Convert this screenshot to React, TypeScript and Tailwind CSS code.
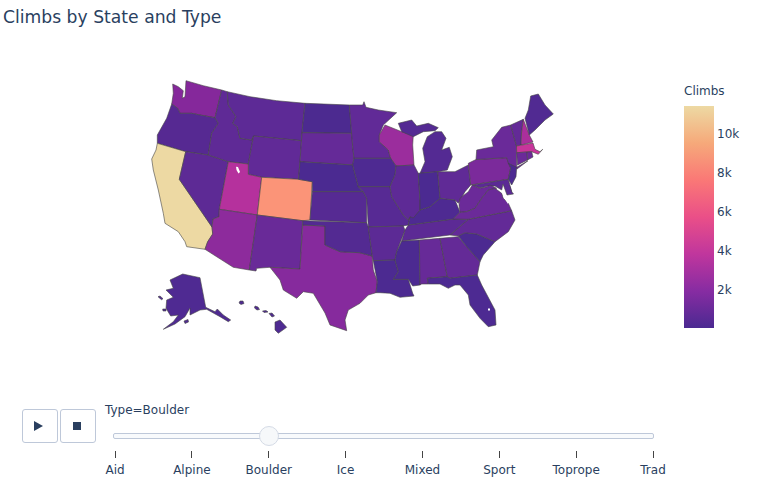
import React from 'react'

const states: { id: string; fill: string; pts: string }[] = [
    { id: 'WA', fill: '#85289b', pts: '172.7,84 178.3,86.7 183.3,90.7 182.3,98.3 185,96.7 186,80.7 203.3,85.7 221.7,90 215,117.7 200,115 191.7,113.3 180,113.3 177.7,108.3 171.7,104 173.3,93.3' },
    { id: 'OR', fill: '#562992', pts: '171.7,104 177.7,108.3 180,113.3 191.7,113.3 200,115 215,117.7 218.3,123.3 211.7,133.3 208.3,155 185.7,151.7 157.3,143.3 157.3,135 166.7,118.3' },
    { id: 'CA', fill: '#edd9a3', pts: '157.3,143.3 185.7,151.7 179.3,179.3 212,227 212.7,234 207.7,241.7 205,249.3 186.7,246.7 185,241.7 178.3,231.7 165,223.3 163.3,213.3 158.3,190 153.3,170 151.7,159 156,150' },
    { id: 'NV', fill: '#5d2a95', pts: '185.7,151.7 208.3,155 228.3,161.7 219.3,209.3 219,216.7 213,219 212,227 179.3,179.3' },
    { id: 'ID', fill: '#5f2a96', pts: '221.7,90 227.3,91.7 228.3,105 236,116.7 232.7,123.3 237.3,126.7 240,138.3 251.7,140 253.5,136 248.3,164 228.3,161.7 208.3,155 211.7,133.3 218.3,123.3 215,117.7' },
    { id: 'MT', fill: '#5d2a96', pts: '227.3,91.7 250,96.7 276.7,100.7 305,103.3 302,132.7 301.5,140.7 253.5,136 251.7,140 240,138.3 237.3,126.7 232.7,123.3 236,116.7 228.3,105' },
    { id: 'WY', fill: '#612a97', pts: '253.5,136 301.5,140.7 300,161.7 298.5,179.3 261.7,177.3 248.3,174.3 248.3,164' },
    { id: 'UT', fill: '#b5319d', pts: '228.3,161.7 248.3,164 248.3,174.3 261.7,177.3 257.3,215 219.3,209.3' },
    { id: 'CO', fill: '#fb9478', pts: '261.7,177.3 298.5,179.3 312.3,181.7 310,220 302.7,220.7 257.3,215' },
    { id: 'AZ', fill: '#8d2b9c', pts: '219.3,209.3 257.3,215 249.3,270 233.3,267.3 205,249.3 207.7,241.7 212.7,234 212,227 213,219 219,216.7' },
    { id: 'NM', fill: '#692a98', pts: '257.3,215 302.7,220.7 300,269 270,267.3 256.7,268.3 256,271 249.3,270' },
    { id: 'TX', fill: '#862a9d', pts: '302.7,225 325,226 325,245 340,251.7 360,252.7 372.3,256 373.3,270 377.3,281.7 376,292.7 368.3,295 360,303.3 348.3,310 345,320 346.7,330.7 330,325 325,313 313.3,293.3 303.3,291.7 296.7,298.3 283.3,290 280,280 270,267.3 300,269' },
    { id: 'ND', fill: '#4c2a90', pts: '305,103.3 349.3,105 351.7,133.3 302,132.7' },
    { id: 'SD', fill: '#652a98', pts: '302,132.7 351.7,133.3 352.7,146.7 354,158.3 352.7,165 300,161.7' },
    { id: 'NE', fill: '#4b2a91', pts: '300,161.7 352.7,165 358.3,186.7 363.3,191.7 312.3,191.7 312.3,181.7 298.5,179.3' },
    { id: 'KS', fill: '#562a93', pts: '312.3,191.7 363.3,191.7 366.7,198.3 366.7,222.7 310,220' },
    { id: 'OK', fill: '#532a92', pts: '302.7,220.7 366.7,222.7 368.3,227 372.3,256 360,252.7 340,251.7 325,245 325,226 302.7,225' },
    { id: 'MN', fill: '#612a97', pts: '349.3,105 362.7,105 364,101.7 366,107.3 378.3,110 396.7,112.7 383.3,125 379.3,135 379.3,141.7 388.3,150 390.7,158.3 354,158.3 352.7,146.7' },
    { id: 'WI', fill: '#9b2d9d', pts: '385,125 401.7,131.7 413.3,135 412.7,145 414,165 396,166 390.7,158.3 388.3,150 379.3,141.7 379.3,135' },
    { id: 'MIU', fill: '#542a93', pts: '398.3,123.3 411.7,120 416.7,126 428.3,123.3 438.3,127.7 435,130.7 423.3,131.7 413.3,136.7 401.7,131.7' },
    { id: 'MIL', fill: '#542a93', pts: '427.3,136.7 435,131.7 441.7,131.7 446,138.3 441.7,150 449.3,147.3 452.3,156.7 447.3,170 437.7,171.7 420,173.3 425,161.7 422.7,148.3' },
    { id: 'IA', fill: '#4e2a92', pts: '354,158.3 390.7,158.3 396,166 395,175 390,186.7 358.3,186.7 352.7,165' },
    { id: 'MO', fill: '#572a94', pts: '358.3,186.7 390,186.7 391.7,196.7 403.3,215 408.3,220 410,216.7 408.3,225 403.3,226 368.3,227 366.7,198.3 363.3,191.7' },
    { id: 'AR', fill: '#5c2a95', pts: '368.3,227 403.3,226 405,230 396.7,251.7 395,260 373.3,260.7 372.3,256' },
    { id: 'LA', fill: '#4c2a91', pts: '373.3,260.7 395,260 398.3,271.7 393.3,279.3 408.3,279.3 412.7,293.3 414,296 400,297.3 390,293.3 380,292.7 376,292.7 377.3,281.7' },
    { id: 'MS', fill: '#4c2a91', pts: '401.7,241 419.3,240 420,285 412.7,286 408.3,279.3 393.3,279.3 398.3,271.7 395,260 396.7,251.7' },
    { id: 'AL', fill: '#672a98', pts: '419.3,240 440,238.3 447.3,276.7 427.3,278.3 428.3,284 421.7,284 420,285' },
    { id: 'GA', fill: '#642a97', pts: '440,238.3 458.3,236.7 466.7,246.7 480,261.7 477.3,275 450,278.3 447.3,276.7' },
    { id: 'FL', fill: '#4d2a92', pts: '427.3,278.3 447.3,276.7 450,278.3 477.3,275 481.7,285 495,310 496,325 488.3,326.7 480,318.3 470,305 468.3,295 460,285 455,285 448.3,288.3 440,284 428.3,284' },
    { id: 'SC', fill: '#4c2a91', pts: '458.3,236 465,232.7 476.7,234 495,241.7 483.3,255 480,261.7 466.7,246.7' },
    { id: 'NC', fill: '#632a97', pts: '450,235 458.3,236 465,232.7 476.7,234 495,241.7 508.3,231.7 515,220 511.7,210.7 468.3,219.3' },
    { id: 'TN', fill: '#5c2a95', pts: '408.3,225 453.3,219 468.3,219.3 450,235 401.7,241 405,230' },
    { id: 'KY', fill: '#4e2a92', pts: '408.3,225 410,216.7 420,210 430,206.7 440,198.3 455,200 460,212.3 453.3,219' },
    { id: 'IL', fill: '#5e2a96', pts: '396,166 414,165 418.3,173.3 420,200 420,210 413.3,218 410,216.7 408.3,220 403.3,215 391.7,196.7 390,186.7 395,175' },
    { id: 'IN', fill: '#4b2a91', pts: '418.3,173.3 437.7,171.7 440,198.3 430,206.7 420,210 420,200' },
    { id: 'OH', fill: '#602a96', pts: '437.7,171.7 455,171.7 468.3,165 470.7,185 465,191.7 458.3,203.3 455,200 440,198.3' },
    { id: 'PA', fill: '#7b2a9b', pts: '468.3,163.3 476,159.5 506.7,157.7 510.7,168 508.3,179.3 470.7,185' },
    { id: 'NY', fill: '#6a2a99', pts: '476,159.5 476.7,150 493.3,146.7 491.7,140 501.7,127.3 510.7,125 516.5,146 516.7,163.3 516.7,167.3 528,160.7 517,169 508.3,163.3 506.7,157.7' },
    { id: 'VT', fill: '#632a97', pts: '510.7,125 523.3,119.3 521.5,133 521,145 516.5,146' },
    { id: 'NH', fill: '#ab2f9c', pts: '523.3,119.3 529.3,135 533,142 521,145 521.5,133' },
    { id: 'ME', fill: '#512a92', pts: '525,118.3 528.3,110 530.7,96 538.3,94 545,105 553.3,114 545,120 535,130 529.3,135' },
    { id: 'MA', fill: '#c8359b', pts: '516.5,146 533,143 535,149.3 540,151.7 542.7,149.3 538.3,154.3 531.7,151.7 516.7,152.7' },
    { id: 'CT', fill: '#6b2a99', pts: '516.7,152.7 527,152 527.5,160 517.5,165' },
    { id: 'RI', fill: '#6a2a98', pts: '527,152 531.7,151.7 533,157 527.5,160' },
    { id: 'NJ', fill: '#4c2a91', pts: '508.3,163.3 516.7,167.3 516,176.7 511.7,185 508.3,179.3 510.7,168' },
    { id: 'DE', fill: '#532a92', pts: '506.7,181.7 510,186.7 511.7,191.7 507.7,191.7' },
    { id: 'MD', fill: '#5b2a95', pts: '472.3,185 508.3,179.3 511.7,191.7 513.5,194 507,195 503,184 501.7,190 495,186 488,186 480,188' },
    { id: 'WV', fill: '#6b2a99', pts: '459,205 460,198.3 468.3,191.7 472.3,185 480,188.3 486.7,186.7 490,185 496.7,188.3 488.3,190 481.7,198.3 475,208.3 466.7,211.7 460,212.3' },
    { id: 'VA', fill: '#6b2a99', pts: '453.3,219 460,212.3 466.7,211.7 475,208.3 481.7,198.3 488.3,190 495,188.3 501.7,193.3 503.3,198.3 508.3,203.3 511.7,210.7 468.3,219.3' },
    { id: 'AK', fill: '#4f2a92', pts: '182.7,274 200,277.7 205.7,307.3 215,311.7 217.3,309 223.3,315 230.7,320 228.3,321.7 220,316.7 206.7,309.3 200,310 190,315 190,308 185,316.7 175,324 163.3,329.3 173.3,321.7 178.3,315 170.7,316 166,308.3 166.7,300 173.3,297.3 166,290 173.3,288.3 170,280' },
    { id: 'AK2', fill: '#4f2a92', pts: '158,296.7 160,296 163,298.7 161.5,299.7' },
    { id: 'AK3', fill: '#4f2a92', pts: '162.7,309 166,309 166,311 163,311' },
    { id: 'AK4', fill: '#4f2a92', pts: '184,321 188,319.5 188.5,322 185,323.5' },
    { id: 'HI1', fill: '#4f2a92', pts: '240,301 243,301 244,303.5 241,304.5 239,303' },
    { id: 'HI2', fill: '#4f2a92', pts: '255,306 258,307 259.5,309.5 257,310 254.5,308' },
    { id: 'HI3', fill: '#4f2a92', pts: '262.5,311 266,310.5 268,312 264,312.5' },
    { id: 'HI4', fill: '#4f2a92', pts: '269,313.5 272,313 274.5,316 272,317' },
    { id: 'HI5', fill: '#4f2a92', pts: '275,322 280,320 286.7,327.3 278.3,333.3 275,330' },
]

const ticks = ['Aid', 'Alpine', 'Boulder', 'Ice', 'Mixed', 'Sport', 'Toprope', 'Trad']
const barTicks = ['10k', '8k', '6k', '4k', '2k']

const App = () => {
    return (
        <div className="flex h-[483px] w-[762px] flex-col overflow-hidden bg-white font-['DejaVu_Sans',sans-serif] text-xs text-[#2a3f5f]">
            <div className="h-[75px] pl-[3px] pt-[5px] text-[17.2px] leading-[24px]">Climbs by State and Type</div>
            <div className="flex h-[265px]">
                <svg className="ml-[140px] h-[265px] w-[420px] shrink-0" viewBox="140 75 420 265">
                    {states.map((s) => (
                        <polygon key={s.id} points={s.pts} fill={s.fill} stroke="#444" strokeWidth="0.6" strokeLinejoin="round" />
                    ))}
                    <polygon points="236,166.7 238,167 240,172 238.5,173.5 236.5,170" fill="#fff" />
                    <polygon points="501.7,190 503,190 509,201 508,204 503.5,197" fill="#fff" />
                    <rect x="488" y="308.5" width="2" height="2" fill="#fff" />
                </svg>
                <div className="ml-[124px] flex flex-col">
                    <div className="h-[31px] pt-[9px] leading-[14px]">Climbs</div>
                    <div className="flex h-[222px]">
                        <div className="h-full w-[30px] bg-[linear-gradient(to_top,#4b2991_0%,#872ca2_16.67%,#c0369d_33.33%,#ea4f88_50%,#fa7876_66.67%,#f6a97a_83.33%,#edd9a3_100%)]" />
                        <div className="ml-[3px] flex flex-col gap-[24.9px] pt-[21px] leading-[14px]">
                            {barTicks.map((t) => (
                                <span key={t}>{t}</span>
                            ))}
                        </div>
                    </div>
                </div>
            </div>
            <div className="flex pl-[22px] pt-[69px]">
                <button className="flex h-[34px] w-[36px] items-center justify-center rounded-[3px] border border-[#bec8d9] bg-white">
                    <svg className="mr-[3px]" width="9" height="10" viewBox="0 0 9 10">
                        <polygon points="0,0 9,5 0,10" fill="#2a3f5f" />
                    </svg>
                </button>
                <button className="ml-[2px] flex h-[34px] w-[36px] items-center justify-center rounded-[3px] border border-[#bec8d9] bg-white">
                    <span className="mr-[2px] h-[8px] w-[8px] bg-[#2a3f5f]" />
                </button>
                <div className="ml-[9px] -mt-[6px] w-[560px] leading-[14px]">
                    Type=Boulder
                    <div className="relative ml-[8px] mt-[16px] h-[6px] w-[541px] rounded-[2px] border border-[#bec8d9] bg-[#f8fafc]">
                        <div className="absolute left-[145px] top-[-8px] h-[20px] w-[20px] rounded-full border border-[#d5dbe6] bg-[#f6f8fa]" />
                    </div>
                </div>
            </div>
            <div className="ml-[76.6px] mt-[8px] flex">
                {ticks.map((t) => (
                    <div key={t} className="flex w-[76.86px] flex-col items-center">
                        <div className="h-[7px] w-px bg-[#444]" />
                        <span className="mt-[5px] leading-[14px]">{t}</span>
                    </div>
                ))}
            </div>
        </div>
    )
}

export default App
